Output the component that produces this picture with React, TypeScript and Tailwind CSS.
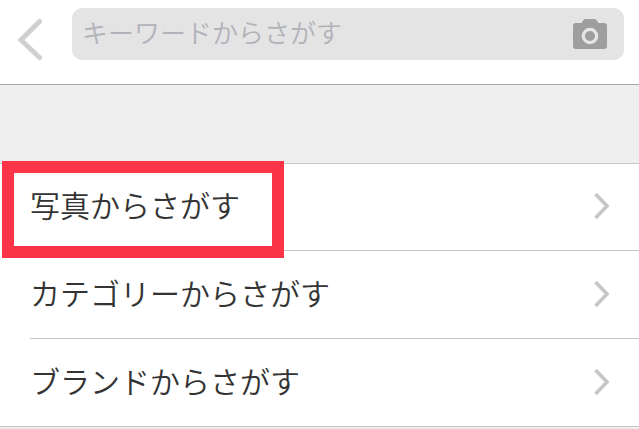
import React, { useState } from 'react';

interface SearchOption {
  id: string;
  label: string;
  highlighted?: boolean;
}

const options: SearchOption[] = [
  { id: 'photo', label: '写真からさがす', highlighted: true },
  { id: 'category', label: 'カテゴリーからさがす' },
  { id: 'brand', label: 'ブランドからさがす' },
];

const BackIcon = () => (
  <svg className="w-7 h-11" viewBox="0 0 28 44" fill="none" stroke="#d0d0d0" strokeWidth={5}>
    <path strokeLinecap="round" strokeLinejoin="miter" d="M23.5 3.5L5 22l18.5 17.5" />
  </svg>
);

const CameraIcon = () => (
  <svg className="w-[34px] h-[30px]" viewBox="0 0 34 30">
    <path
      fill="#9e9e9e"
      d="M3 4h5.500L11 .6q.5-.6 1.200-.6h9.600q.7 0 1.200.6L25.500 4H31a3 3 0 0 1 3 3V27a3 3 0 0 1-3 3H3a3 3 0 0 1-3-3V7a3 3 0 0 1 3-3z"
    />
    <circle cx="17" cy="17" r="6.7" fill="none" stroke="#e6e6e6" strokeWidth={3.2} />
  </svg>
);

const ChevronIcon = () => (
  <svg className="w-4 h-7 shrink-0" viewBox="0 0 16 28" fill="none" stroke="#c6c6c8" strokeWidth={3.6}>
    <path d="M1.5 2L13 14L1.5 26" />
  </svg>
);

const App: React.FC = () => {
  const [keyword, setKeyword] = useState('');

  return (
    <div className="min-h-screen bg-[#eeeeee] font-['Noto_Sans_CJK_JP',sans-serif] font-[350] text-[#333333]">
      <header className="flex items-start pl-4 pr-[15px] pt-2 pb-[22px] bg-white border-b border-[#a8a8a8]">
        <button type="button" aria-label="戻る" className="w-14 shrink-0 pt-[10px]">
          <BackIcon />
        </button>
        <form
          className="flex flex-1 min-w-0 items-center h-[52px] pl-[10px] pr-[17px] bg-[#e4e4e4] rounded-[10px]"
          onSubmit={e => e.preventDefault()}
        >
          <input
            type="text"
            aria-label="キーワード"
            placeholder="キーワードからさがす"
            className="flex-1 min-w-0 h-full pb-1.5 bg-transparent outline-none text-[26px] placeholder:text-[#b2b2ba]"
            value={keyword}
            onChange={e => setKeyword(e.target.value)}
          />
          <button type="button" aria-label="カメラ">
            <CameraIcon />
          </button>
        </form>
      </header>

      <ul className="mt-[78px] bg-white">
        {options.map((option, i) => (
          <li
            key={option.id}
            className={`relative h-22 border-[#c6c6c8] first:border-t last:border-b`}
          >
            <div className={`ml-[30px] h-full ${i < options.length - 1 ? 'border-b border-[#c6c6c8]' : ''}`}>
              <button type="button" className="flex w-full h-full items-center justify-between pr-[29px] pb-0.5 text-left text-[30px] leading-10">
                <span className="pb-1">{option.label}</span>
                <ChevronIcon />
              </button>
            </div>
            {option.highlighted && (
              <div className="absolute z-10 left-[2px] -top-[3px] w-[282px] h-[97px] border-12 border-[#fb3447] pointer-events-none" />
            )}
          </li>
        ))}
      </ul>
    </div>
  );
};

export default App;
